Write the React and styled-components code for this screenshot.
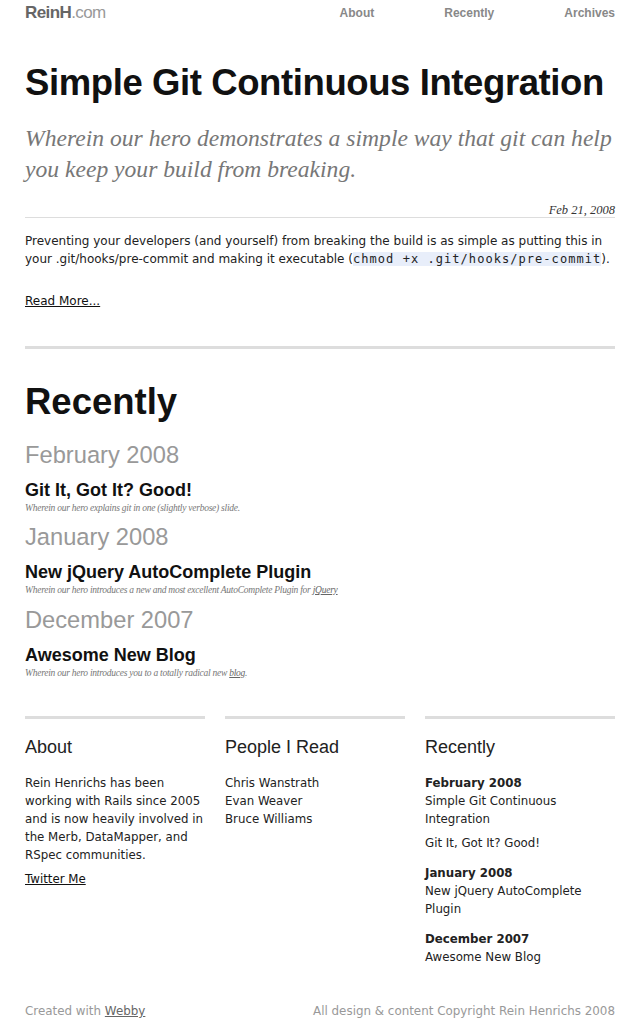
import React from "react";
import styled, { createGlobalStyle } from "styled-components";

const Global = createGlobalStyle`
  html, body { margin: 0; padding: 0; background: #fff; }
  body { font-family: "DejaVu Sans", Verdana, sans-serif; color: #222; }
  a { color: inherit; }
`;

const Page = styled.div`
  width: 590px;
  padding: 0 25px;
`;

const Header = styled.header`
  display: flex;
  justify-content: space-between;
  align-items: center;
  height: 26px;
  font-family: "Liberation Sans", Arial, sans-serif;
`;

const Logo = styled.div`
  font-size: 17px;
  letter-spacing: -0.6px;
  color: #999;
  b { color: #666; font-weight: bold; }
`;

const Nav = styled.nav`
  display: flex;
  gap: 70px;
  font-size: 12px;
  font-weight: bold;
  color: #888;
`;

const Title = styled.h1`
  font-family: "Liberation Sans", Arial, sans-serif;
  font-size: 36.5px;
  font-weight: bold;
  color: #111;
  margin: 37px 0 0;
  line-height: 40px;
  letter-spacing: -0.4px;
`;

const Subtitle = styled.p`
  font-family: "Liberation Serif", Georgia, serif;
  font-style: italic;
  font-size: 23.6px;
  line-height: 31px;
  color: #777;
  margin: 20px 0 0;
`;

const DateLine = styled.div`
  font-family: "Liberation Serif", Georgia, serif;
  font-style: italic;
  font-size: 12.5px;
  line-height: 14px;
  color: #333;
  text-align: right;
  margin-top: 18px;
  padding-bottom: 0;
  border-bottom: 1px solid #ddd;
`;

const Body = styled.p`
  font-size: 12px;
  line-height: 18px;
  color: #222;
  margin: 14px 0 0;
`;

const Code = styled.code`
  font-family: "DejaVu Sans Mono", monospace;
  font-size: 12px;
  line-height: 1;
  letter-spacing: 1.05px;
  background: #e8eefa;
`;

const MoreLink = styled.a`
  display: block;
  font-size: 12px;
  color: #111;
  margin-top: 26px;
`;

const ThickRule = styled.hr`
  border: 0;
  height: 3px;
  background: #ddd;
  margin: ${(p) => p.$mt || 0}px 0 0;
`;

const SectionTitle = styled.h2`
  font-family: "Liberation Sans", Arial, sans-serif;
  font-size: 36.5px;
  font-weight: bold;
  color: #111;
  margin: 31px 0 0;
  line-height: 44px;
`;

const MonthHead = styled.h3`
  font-family: "Liberation Sans", Arial, sans-serif;
  font-size: 23.7px;
  font-weight: normal;
  color: #999;
  margin: ${(p) => p.$mt}px 0 0;
  line-height: 28px;
`;

const PostTitle = styled.h4`
  font-family: "Liberation Sans", Arial, sans-serif;
  font-size: 18px;
  font-weight: bold;
  color: #111;
  margin: 11px 0 0;
  line-height: 20px;
`;

const PostDesc = styled.div`
  font-family: "Liberation Serif", Georgia, serif;
  font-style: italic;
  font-size: 9.5px;
  color: #777;
  line-height: 12px;
  letter-spacing: -0.25px;
  margin-top: 2px;
  a { color: #666; }
`;

const Columns = styled.div`
  display: grid;
  grid-template-columns: 180px 180px 190px;
  gap: 20px;
  margin-top: 37px;
`;

const Column = styled.section``;

const ColTitle = styled.h5`
  font-family: "Liberation Sans", Arial, sans-serif;
  font-size: 18px;
  font-weight: normal;
  color: #222;
  margin: 17px 0 0;
  line-height: 22px;
`;

const ColText = styled.div`
  font-size: 11.8px;
  line-height: 18px;
  color: #222;
  margin-top: 16px;
`;

const ColLink = styled.a`
  display: block;
  font-size: 11.8px;
  line-height: 18px;
  color: #111;
  margin-top: 6px;
`;

const RecentGroup = styled.div`
  font-size: 11.8px;
  line-height: 18px;
  color: #222;
  margin-top: ${(p) => p.$mt}px;
  b { font-weight: bold; display: block; }
`;

const RecentItem = styled.div`
  margin-top: ${(p) => p.$mt || 0}px;
`;

const Footer = styled.footer`
  display: flex;
  justify-content: space-between;
  font-size: 11.9px;
  color: #999;
  margin-top: 38px;
  padding-bottom: 5px;
  a { color: #666; }
`;

export default function App() {
  return (
    <>
      <Global />
      <Page>
        <Header>
          <Logo><b>ReinH</b>.com</Logo>
          <Nav>
            <span>About</span>
            <span>Recently</span>
            <span>Archives</span>
          </Nav>
        </Header>
        <Title>Simple Git Continuous Integration</Title>
        <Subtitle>Wherein our hero demonstrates a simple way that git can help you keep your build from breaking.</Subtitle>
        <DateLine>Feb 21, 2008</DateLine>
        <Body>
          Preventing your developers (and yourself) from breaking the build is as simple as putting this in your .git/hooks/pre-commit and making it executable (<Code>chmod +x .git/hooks/pre-commit</Code>).
        </Body>
        <MoreLink href="#">Read More...</MoreLink>
        <ThickRule $mt={38} />
        <SectionTitle>Recently</SectionTitle>
        <MonthHead $mt={17}>February 2008</MonthHead>
        <PostTitle>Git It, Got It? Good!</PostTitle>
        <PostDesc>Wherein our hero explains git in one (slightly verbose) slide.</PostDesc>
        <MonthHead $mt={9}>January 2008</MonthHead>
        <PostTitle>New jQuery AutoComplete Plugin</PostTitle>
        <PostDesc>Wherein our hero introduces a new and most excellent AutoComplete Plugin for <a href="#">jQuery</a></PostDesc>
        <MonthHead $mt={10}>December 2007</MonthHead>
        <PostTitle>Awesome New Blog</PostTitle>
        <PostDesc>Wherein our hero introduces you to a totally radical new <a href="#">blog</a>.</PostDesc>
        <Columns>
          <Column>
            <ThickRule />
            <ColTitle>About</ColTitle>
            <ColText>Rein Henrichs has been working with Rails since 2005 and is now heavily involved in the Merb, DataMapper, and RSpec communities.</ColText>
            <ColLink href="#">Twitter Me</ColLink>
          </Column>
          <Column>
            <ThickRule />
            <ColTitle>People I Read</ColTitle>
            <ColText>
              Chris Wanstrath<br />Evan Weaver<br />Bruce Williams
            </ColText>
          </Column>
          <Column>
            <ThickRule />
            <ColTitle>Recently</ColTitle>
            <RecentGroup $mt={16}>
              <b>February 2008</b>
              <RecentItem>Simple Git Continuous Integration</RecentItem>
              <RecentItem $mt={6}>Git It, Got It? Good!</RecentItem>
            </RecentGroup>
            <RecentGroup $mt={12}>
              <b>January 2008</b>
              <RecentItem>New jQuery AutoComplete Plugin</RecentItem>
            </RecentGroup>
            <RecentGroup $mt={12}>
              <b>December 2007</b>
              <RecentItem>Awesome New Blog</RecentItem>
            </RecentGroup>
          </Column>
        </Columns>
        <Footer>
          <span>Created with <a href="#">Webby</a></span>
          <span>All design &amp; content Copyright Rein Henrichs 2008</span>
        </Footer>
      </Page>
    </>
  );
}
